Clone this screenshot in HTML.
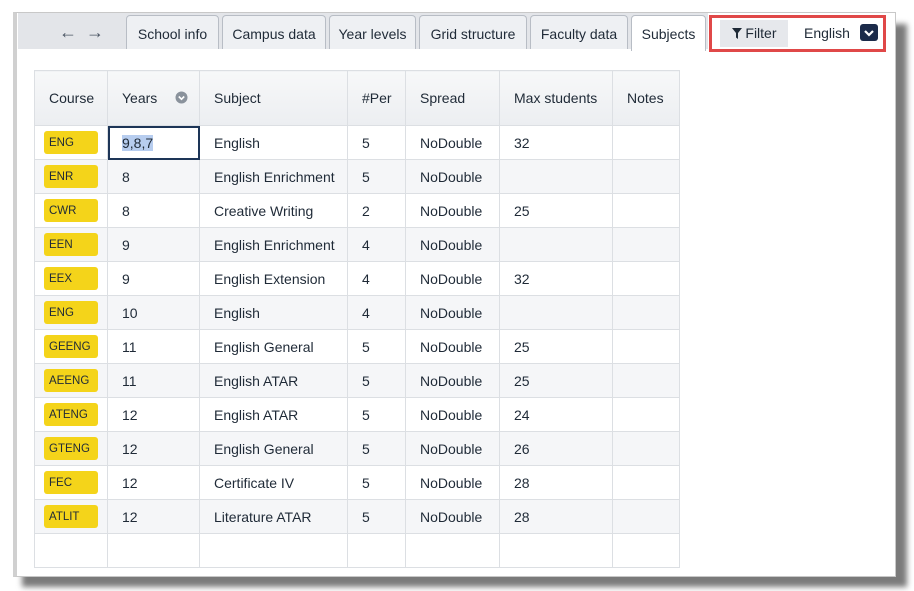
<!DOCTYPE html>
<html><head><meta charset="utf-8"><style>
*{box-sizing:border-box;margin:0;padding:0}
body{width:914px;height:591px;background:#fff;position:relative;overflow:hidden;font-family:"Liberation Sans",sans-serif;color:#1f2a37}
.shadow{position:absolute;left:22px;top:24px;width:885px;height:563px;background:#7a7a7a;filter:blur(3px)}
.frame{position:absolute;left:13px;top:12px;width:883px;height:565px;background:#fff;border:1px solid #c8c8c8;border-left:4px solid #d0d0d0}
.topbar{position:absolute;left:18px;top:13px;width:690px;height:36px;background:#e3e5e9}
.arr{position:absolute;top:22px;font-size:18px;color:#4a5563}
.tab{position:absolute;top:15px;height:34px;border:1px solid #b8bdc5;border-bottom:none;border-radius:4px 4px 0 0;background:#eef0f3;font-size:14px;color:#1f2a37;text-align:center;line-height:36px}
.tab.act{background:#fff}
.filt{position:absolute;left:709px;top:15px;width:177px;height:37px;border:3px solid #e04848;background:#fff}
.fb{position:absolute;left:8px;top:2px;width:68px;height:27px;background:#e6e8ec;font-size:14px;line-height:27px;text-align:center;color:#1f2a37}
.eng{position:absolute;left:92px;top:2px;font-size:14px;line-height:27px;color:#1f2a37}
.dd{position:absolute;left:148px;top:6px;width:18px;height:17px;background:#1b2b4a;border-radius:3px}
table{position:absolute;left:34px;top:70px;border-collapse:collapse;font-size:14px}
td,th{border:1px solid #dcdfe3;padding:0 0 0 14px;text-align:left;height:34px;vertical-align:middle}
th{height:55px;background:linear-gradient(#f7f8f9,#eceef1);font-weight:normal;color:#1f2a37}
tr:nth-child(odd) td{background:#f5f6f8}
td.c{padding-left:9px}
.b{display:flex;align-items:center;width:54px;height:23px;background:#f4d41a;border-radius:3px;font-size:11.5px;padding-left:5px;color:#1f2a37}
.sel{outline:2px solid #1d3557;outline-offset:-2px}
.hl{background:#b7cdef}
</style></head><body>
<div class="shadow"></div>
<div class="frame"></div>
<div class="topbar"></div>
<div class="arr" style="left:59px">&#8592;</div>
<div class="arr" style="left:86px">&#8594;</div>
<div class="tab" style="left:126px;width:93px">School info</div>
<div class="tab" style="left:222px;width:104px">Campus data</div>
<div class="tab" style="left:329px;width:87px">Year levels</div>
<div class="tab" style="left:419px;width:108px">Grid structure</div>
<div class="tab" style="left:530px;width:98px">Faculty data</div>
<div class="tab act" style="left:631px;width:75px;height:36px">Subjects</div>
<div class="filt"><div class="fb"><svg width="10" height="11" style="vertical-align:-1px"><path d="M0 0h10L6 5v6L4 9.5V5z" fill="#1f2a37"/></svg> Filter</div><div class="eng">English</div><div class="dd"><svg width="18" height="17"><path d="M5 7l4 4 4-4" stroke="#fff" stroke-width="2.2" fill="none"/></svg></div></div>
<table>
<tr><th style="width:73px">Course</th><th style="width:92px">Years <svg width="13" height="13" style="margin-left:14px;vertical-align:-1px"><circle cx="6.5" cy="6.5" r="6" fill="#8a929c"/><path d="M3.8 5.5l2.7 2.7 2.7-2.7" stroke="#fff" stroke-width="1.6" fill="none"/></svg></th><th style="width:148px">Subject</th><th style="width:58px">#Per</th><th style="width:94px">Spread</th><th style="width:113px">Max students</th><th style="width:67px">Notes</th></tr>
<tr><td class="c"><span class="b">ENG</span></td><td class="sel"><span class="hl">9,8,7</span></td><td>English</td><td>5</td><td>NoDouble</td><td>32</td><td></td></tr>
<tr><td class="c"><span class="b">ENR</span></td><td>8</td><td>English Enrichment</td><td>5</td><td>NoDouble</td><td></td><td></td></tr>
<tr><td class="c"><span class="b">CWR</span></td><td>8</td><td>Creative Writing</td><td>2</td><td>NoDouble</td><td>25</td><td></td></tr>
<tr><td class="c"><span class="b">EEN</span></td><td>9</td><td>English Enrichment</td><td>4</td><td>NoDouble</td><td></td><td></td></tr>
<tr><td class="c"><span class="b">EEX</span></td><td>9</td><td>English Extension</td><td>4</td><td>NoDouble</td><td>32</td><td></td></tr>
<tr><td class="c"><span class="b">ENG</span></td><td>10</td><td>English</td><td>4</td><td>NoDouble</td><td></td><td></td></tr>
<tr><td class="c"><span class="b">GEENG</span></td><td>11</td><td>English General</td><td>5</td><td>NoDouble</td><td>25</td><td></td></tr>
<tr><td class="c"><span class="b">AEENG</span></td><td>11</td><td>English ATAR</td><td>5</td><td>NoDouble</td><td>25</td><td></td></tr>
<tr><td class="c"><span class="b">ATENG</span></td><td>12</td><td>English ATAR</td><td>5</td><td>NoDouble</td><td>24</td><td></td></tr>
<tr><td class="c"><span class="b">GTENG</span></td><td>12</td><td>English General</td><td>5</td><td>NoDouble</td><td>26</td><td></td></tr>
<tr><td class="c"><span class="b">FEC</span></td><td>12</td><td>Certificate IV</td><td>5</td><td>NoDouble</td><td>28</td><td></td></tr>
<tr><td class="c"><span class="b">ATLIT</span></td><td>12</td><td>Literature ATAR</td><td>5</td><td>NoDouble</td><td>28</td><td></td></tr>
<tr><td style="height:33px;background:#fff"></td><td style="background:#fff"></td><td style="background:#fff"></td><td style="background:#fff"></td><td style="background:#fff"></td><td style="background:#fff"></td><td style="background:#fff"></td></tr>
</table>
</body></html>
